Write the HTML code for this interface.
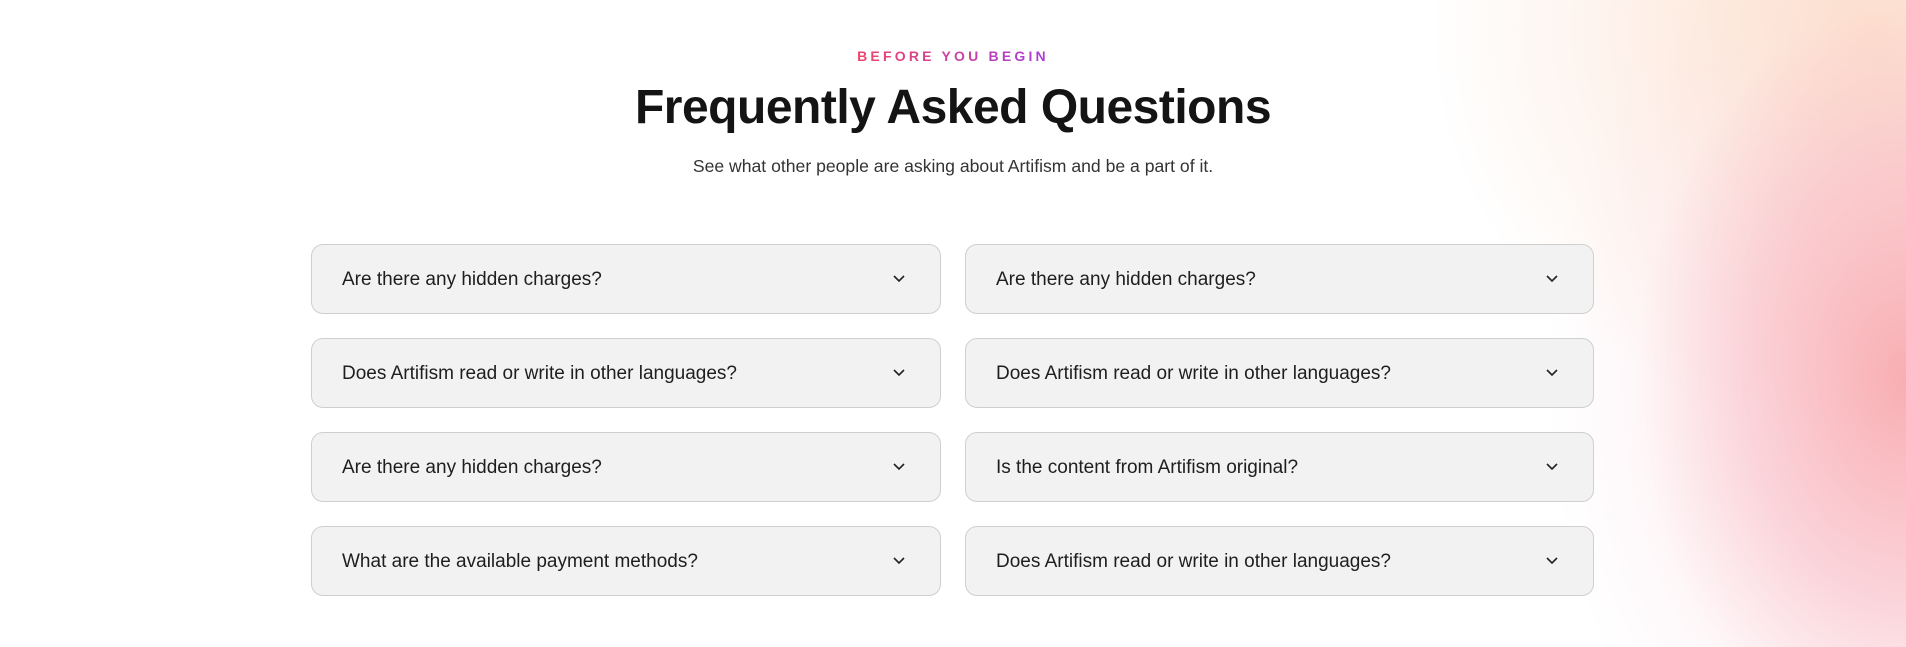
<!DOCTYPE html>
<html><head><style>
html,body{margin:0;padding:0;width:1906px;height:647px;overflow:hidden;background:#fff;font-family:"Liberation Sans",sans-serif;position:relative}
.bg{position:absolute;inset:0;background:
radial-gradient(ellipse 360px 500px at 1906px 380px,rgba(248,170,175,.95),rgba(248,185,195,.6) 45%,rgba(252,225,230,.25) 75%,rgba(255,255,255,0) 100%),
radial-gradient(ellipse 440px 400px at 1870px 30px,rgba(252,220,195,.95),rgba(252,225,210,.45) 55%,rgba(255,255,255,0) 100%);}
.eyebrow{position:absolute;top:48px;left:0;width:1906px;text-align:center;font-size:14px;letter-spacing:3.2px;font-weight:600}
.eyebrow span{background:linear-gradient(90deg,#f0446a,#a63fd9);-webkit-background-clip:text;color:transparent}
h1{position:absolute;top:80px;left:0;width:1906px;text-align:center;margin:0;font-size:48px;font-weight:700;color:#141414;letter-spacing:-0.5px}
.sub{position:absolute;top:156px;left:0;width:1906px;text-align:center;font-size:17.6px;color:#333}
.card{position:absolute;height:68px;background:#f2f2f2;border:1px solid #cfcfcf;border-radius:12px;box-sizing:content-box;font-size:19px;color:#1e1e1e;line-height:70px;padding-left:30px}
.card svg{position:absolute;right:34px;top:29px}
</style></head><body>
<div class="bg"></div>
<div class="eyebrow"><span>BEFORE YOU BEGIN</span></div>
<h1>Frequently Asked Questions</h1>
<div class="sub">See what other people are asking about Artifism and be a part of it.</div>

<div class="card" style="left:311px;top:244px;width:598px">Are there any hidden charges?<svg width="14" height="9" viewBox="0 0 14 9"><path d="M2 2l5 5 5-5" fill="none" stroke="#222" stroke-width="1.6"/></svg></div>
<div class="card" style="left:311px;top:338px;width:598px">Does Artifism read or write in other languages?<svg width="14" height="9" viewBox="0 0 14 9"><path d="M2 2l5 5 5-5" fill="none" stroke="#222" stroke-width="1.6"/></svg></div>
<div class="card" style="left:311px;top:432px;width:598px">Are there any hidden charges?<svg width="14" height="9" viewBox="0 0 14 9"><path d="M2 2l5 5 5-5" fill="none" stroke="#222" stroke-width="1.6"/></svg></div>
<div class="card" style="left:311px;top:526px;width:598px">What are the available payment methods?<svg width="14" height="9" viewBox="0 0 14 9"><path d="M2 2l5 5 5-5" fill="none" stroke="#222" stroke-width="1.6"/></svg></div>

<div class="card" style="left:965px;top:244px;width:597px">Are there any hidden charges?<svg width="14" height="9" viewBox="0 0 14 9"><path d="M2 2l5 5 5-5" fill="none" stroke="#222" stroke-width="1.6"/></svg></div>
<div class="card" style="left:965px;top:338px;width:597px">Does Artifism read or write in other languages?<svg width="14" height="9" viewBox="0 0 14 9"><path d="M2 2l5 5 5-5" fill="none" stroke="#222" stroke-width="1.6"/></svg></div>
<div class="card" style="left:965px;top:432px;width:597px">Is the content from Artifism original?<svg width="14" height="9" viewBox="0 0 14 9"><path d="M2 2l5 5 5-5" fill="none" stroke="#222" stroke-width="1.6"/></svg></div>
<div class="card" style="left:965px;top:526px;width:597px">Does Artifism read or write in other languages?<svg width="14" height="9" viewBox="0 0 14 9"><path d="M2 2l5 5 5-5" fill="none" stroke="#222" stroke-width="1.6"/></svg></div>
</body></html>
